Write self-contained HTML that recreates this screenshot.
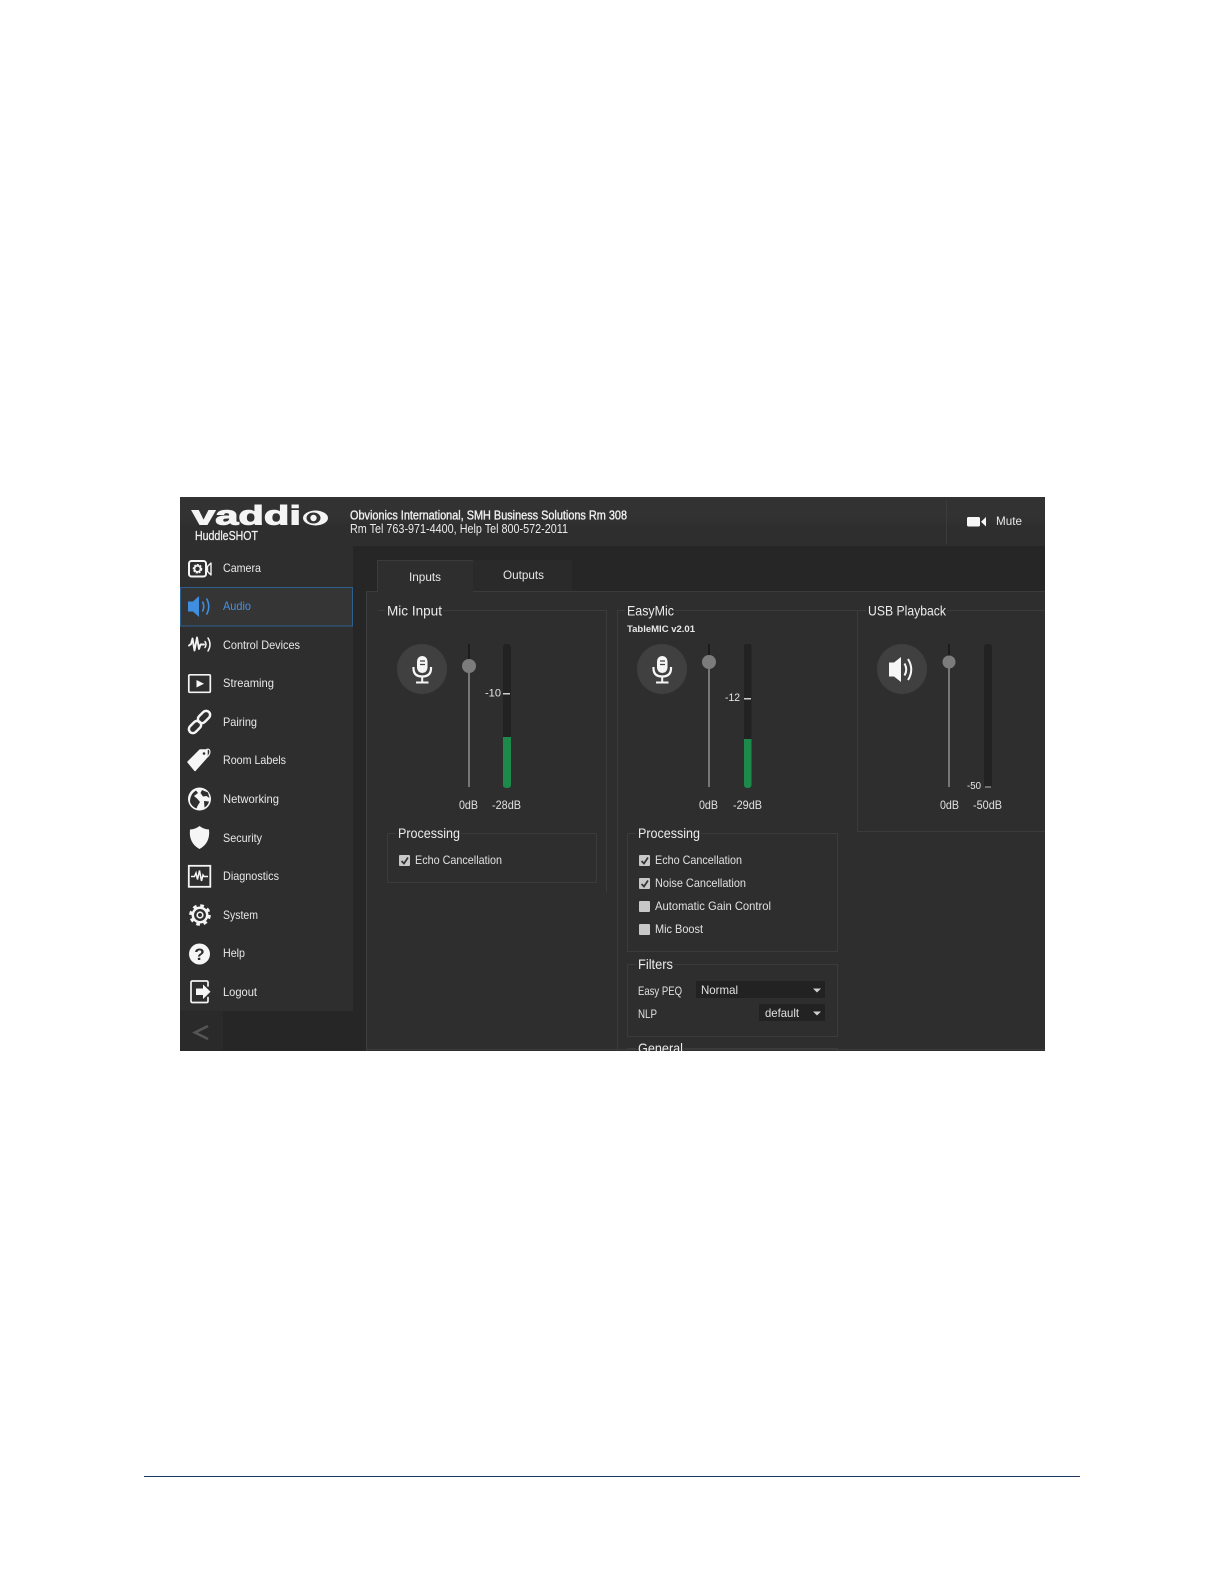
<!DOCTYPE html>
<html><head><meta charset="utf-8"><style>
html,body{margin:0;padding:0;background:#fff;width:1224px;height:1584px;overflow:hidden}
svg{display:block;position:absolute;left:0;top:0}
text{font-family:"Liberation Sans",sans-serif;fill:#e6e6e6;font-size:12px}
.n{font-size:12px;fill:#e8e8e8}
.h{font-size:14px;fill:#ececec}
.s{font-size:12px;fill:#e0e0e0}
.b{font-size:12.5px;font-weight:bold;fill:#f0f0f0}
.l{fill:none;stroke:#3b3b3b;stroke-width:1}
.i{fill:none;stroke:#f4f4f4;stroke-width:2;stroke-linecap:round;stroke-linejoin:round}
.f{fill:#f6f6f6}
.c{fill:#c8c8c8}
.k{fill:none;stroke:#333;stroke-width:1.7}
</style></head><body>
<svg width="1224" height="1584" viewBox="0 0 1224 1584" xmlns="http://www.w3.org/2000/svg">
<defs>
<clipPath id="cp"><rect x="180" y="497" width="865" height="554"/></clipPath>
<linearGradient id="hd" x1="0" y1="0" x2="0" y2="1"><stop offset="0" stop-color="#323232"/><stop offset="1" stop-color="#2d2d2d"/></linearGradient>
<filter id="sf" x="0" y="0" width="100%" height="100%"><feGaussianBlur stdDeviation="0.3"/></filter>
</defs>
<rect x="144" y="1476" width="936" height="1" fill="#1f3864"/>
<g clip-path="url(#cp)"><g filter="url(#sf)">
<rect x="180" y="497" width="865" height="554" fill="#252525"/>
<rect x="180" y="497" width="865" height="49" fill="url(#hd)"/>
<rect x="366" y="591" width="679" height="460" fill="#2f2f2f"/>
<path d="M366 591.500H1045" stroke="#3a3a3a"/>
<path d="M366.500 591V1051" stroke="#3d3d3d"/>
<rect x="180" y="546" width="173" height="465" fill="#2e2e2e"/>
<rect x="180" y="1011" width="43" height="40" fill="#2a2a2a"/>
<path d="M208 1026L195 1032.500L208 1039" fill="none" stroke="#555" stroke-width="2.600"/>
<path d="M366 1049.500H1045" stroke="#3a3a3a"/>

<!-- logo -->
<text x="192" y="524.500" textLength="109" lengthAdjust="spacingAndGlyphs" style="font-size:27px;font-weight:bold;fill:#f4f4f4;stroke:#f4f4f4;stroke-width:1">vaddi</text>
<ellipse cx="315.500" cy="518" rx="12.500" ry="7.500" fill="#f4f4f4"/><ellipse cx="313.500" cy="518" rx="7" ry="5.500" fill="#303030"/><circle cx="313.500" cy="518" r="3.200" fill="#f4f4f4"/>
<text x="195" y="540" textLength="63" lengthAdjust="spacingAndGlyphs" class="b" style="font-weight:normal;stroke:#f0f0f0;stroke-width:.25">HuddleSHOT</text>
<text x="350" y="519.500" textLength="277" lengthAdjust="spacingAndGlyphs" class="b" style="font-weight:normal;stroke:#f0f0f0;stroke-width:.35">Obvionics International, SMH Business Solutions Rm 308</text>
<text x="350" y="533" textLength="218" lengthAdjust="spacingAndGlyphs" style="font-size:12.500px;fill:#eaeaea">Rm Tel 763-971-4400, Help Tel 800-572-2011</text>
<path d="M946.500 500V544" stroke="#3a3a3a"/>
<rect x="967" y="517" width="13" height="9.500" rx="1.500" class="f"/><path d="M986 517V526.500L981 521.800Z" class="f"/>
<text x="996" y="525" textLength="26" lengthAdjust="spacingAndGlyphs" class="n">Mute</text>

<!-- tabs -->
<rect x="377" y="560" width="96" height="32" fill="#2f2f2f"/><path d="M377.500 592V560.500H473" fill="none" stroke="#3a3a3a"/>
<rect x="473" y="560" width="99" height="31" fill="#292929"/>
<text x="409" y="581" textLength="32" lengthAdjust="spacingAndGlyphs" class="n">Inputs</text>
<text x="503" y="579" textLength="41" lengthAdjust="spacingAndGlyphs" class="n">Outputs</text>

<!-- audio row -->
<rect x="180.500" y="587.500" width="172" height="38.500" fill="#353535" stroke="#2f5f8f"/>

<!-- nav labels -->
<text x="223" y="572" textLength="38" lengthAdjust="spacingAndGlyphs" class="n">Camera</text>
<text x="223" y="610" textLength="28" lengthAdjust="spacingAndGlyphs" class="n" style="fill:#4a90e2">Audio</text>
<text x="223" y="649" textLength="77" lengthAdjust="spacingAndGlyphs" class="n">Control Devices</text>
<text x="223" y="687" textLength="51" lengthAdjust="spacingAndGlyphs" class="n">Streaming</text>
<text x="223" y="726" textLength="34" lengthAdjust="spacingAndGlyphs" class="n">Pairing</text>
<text x="223" y="764" textLength="63" lengthAdjust="spacingAndGlyphs" class="n">Room Labels</text>
<text x="223" y="803" textLength="56" lengthAdjust="spacingAndGlyphs" class="n">Networking</text>
<text x="223" y="842" textLength="39" lengthAdjust="spacingAndGlyphs" class="n">Security</text>
<text x="223" y="880" textLength="56" lengthAdjust="spacingAndGlyphs" class="n">Diagnostics</text>
<text x="223" y="919" textLength="35" lengthAdjust="spacingAndGlyphs" class="n">System</text>
<text x="223" y="957" textLength="22" lengthAdjust="spacingAndGlyphs" class="n">Help</text>
<text x="223" y="996" textLength="34" lengthAdjust="spacingAndGlyphs" class="n">Logout</text>

<!-- nav icons -->
<rect x="189" y="561" width="17" height="15.500" rx="2.500" class="i"/>
<circle cx="197.500" cy="568.800" r="3.600" fill="none" stroke="#f4f4f4" stroke-width="2.400" stroke-dasharray="1.800 .9"/>
<circle cx="197.500" cy="568.800" r="3" fill="none" stroke="#f4f4f4" stroke-width="1.600"/>
<path d="M211 563V575L207.500 571.500V566.500Z" class="i" style="stroke-width:1.400"/>

<path d="M188 601.500H193L199 596V617L193 611.500H188Z" fill="#3f8ee0"/>
<path d="M202.500 601.500Q205 606.500 202.500 611.500M206.500 598.500Q211 606.500 206.500 614.500" fill="none" stroke="#3f8ee0" stroke-width="1.600"/>

<path d="M189 645.500L191 644L192.500 638.500L194.500 650.500L197 637.500L199 649L200.500 644.500H204" class="i" style="stroke-width:1.900"/>
<path d="M205 641.500Q207 644.500 205 647.500M208 638Q212 644.500 208 651" class="i" style="stroke-width:1.500"/>

<rect x="188.800" y="674.800" width="21.500" height="17.500" rx="1" class="i" style="stroke-width:1.700"/>
<path d="M196.500 680V687.500L204 683.700Z" class="f"/>

<rect x="197" y="713" width="14" height="8" rx="4" transform="rotate(-45 204 717)" fill="none" stroke="#f4f4f4" stroke-width="2.500"/>
<rect x="188" y="723" width="14" height="8" rx="4" transform="rotate(-45 195 727)" fill="none" stroke="#f4f4f4" stroke-width="2.500"/>

<path d="M188 762L200 750H207V757L195 770.500Z" class="f" stroke="#f6f6f6" stroke-linejoin="round" stroke-width="1.500"/>
<circle cx="204" cy="753.500" r="1.300" fill="#2e2e2e"/>
<path d="M205 752Q207 747.500 209.500 750Q211 753 207.500 757" fill="none" stroke="#f4f4f4" stroke-width="1.200"/>

<circle cx="199.500" cy="799" r="11.500" class="f"/>
<path d="M190 802Q190 794 196 790.500L198 793L194 796L197.500 799L200 802L197.500 806L196.500 808.500Q191.500 806.500 190 802ZM202 790L208 792.500L209.500 798L206.500 796L203 796.500L200.500 793ZM204 801L209 801.500Q208 805.500 204.500 807.500Z" fill="#2e2e2e"/>

<path d="M199.500 826Q204 829.500 209 829.500Q210.500 843 199.500 849Q188.500 843 190 829.500Q195 829.500 199.500 826Z" class="f"/>

<rect x="188.800" y="865.800" width="21.500" height="21" class="i" style="stroke-width:1.800;stroke-linejoin:miter"/>
<path d="M191 876.500H194.500L196 873L197.500 879.500L199.500 870.500L201.500 881L203 875L204 876.500H208" fill="none" stroke="#f4f4f4" stroke-width="1.500"/>

<circle cx="200" cy="915" r="7.200" fill="none" stroke="#f4f4f4" stroke-width="2.500"/>
<circle cx="200" cy="915" r="9.200" fill="none" stroke="#f4f4f4" stroke-width="3.200" stroke-dasharray="3.600 3.620"/>
<circle cx="200" cy="915" r="2.800" fill="none" stroke="#f4f4f4" stroke-width="1.600"/>

<circle cx="199.500" cy="954" r="10.500" class="f"/>
<text x="199.500" y="960" text-anchor="middle" style="font-size:17px;font-weight:bold;fill:#2e2e2e">?</text>

<path d="M208 986V982.500Q208 981 206.500 981H192.500Q191 981 191 982.500V1001Q191 1002.500 192.500 1002.500H206.500Q208 1002.500 208 1001V997.500" class="i" style="stroke-width:1.700"/>
<path d="M196 988.500H203V984.500L210.500 991.700L203 999V995H196Z" class="f"/>

<!-- fieldsets -->
<path d="M378 610.500H385M443 610.500H606.500V892" class="l"/>
<path d="M617.500 1051V610.500H625M675 610.500H857.500V831.500H1045M857.500 610.500H866M947 610.500H1045" class="l"/>
<path d="M396 833.500H387.500V882.500H596.500V833.500H461" class="l"/>
<path d="M636 833.500H627.500V951.500H837.500V833.500H701" class="l"/>
<path d="M636 964.500H627.500V1036.500H837.500V964.500H674" class="l"/>
<path d="M636 1048.500H627.500V1051M837.500 1051V1048.500H684" class="l"/>

<text x="387" y="615.500" textLength="55" lengthAdjust="spacingAndGlyphs" class="h">Mic Input</text>
<text x="627" y="615.500" textLength="47" lengthAdjust="spacingAndGlyphs" class="h">EasyMic</text>
<text x="868" y="615.500" textLength="78" lengthAdjust="spacingAndGlyphs" class="h">USB Playback</text>
<text x="627" y="632" textLength="68" lengthAdjust="spacingAndGlyphs" style="font-size:9.500px;font-weight:bold;fill:#e8e8e8">TableMIC v2.01</text>

<!-- circles -->
<circle cx="422" cy="669" r="25" fill="#3f3f3f"/>
<circle cx="662" cy="669" r="25" fill="#3f3f3f"/>
<circle cx="902" cy="669" r="25" fill="#3f3f3f"/>
<g>
<rect x="417" y="656" width="10.500" height="17" rx="5.200" class="f"/>
<path d="M420 661H425M420 664.500H425" stroke="#3f3f3f" stroke-width="1.300"/>
<path d="M413.500 667V669Q414 676.500 422.200 676.500Q430.500 676.500 431 669V667" fill="none" stroke="#f6f6f6" stroke-width="2.200"/>
<path d="M422.200 676V681.500M416 682.500H428.500" stroke="#f6f6f6" stroke-width="2" fill="none"/>
</g>
<g transform="translate(240 0)">
<rect x="417" y="656" width="10.500" height="17" rx="5.200" class="f"/>
<path d="M420 661H425M420 664.500H425" stroke="#3f3f3f" stroke-width="1.300"/>
<path d="M413.500 667V669Q414 676.500 422.200 676.500Q430.500 676.500 431 669V667" fill="none" stroke="#f6f6f6" stroke-width="2.200"/>
<path d="M422.200 676V681.500M416 682.500H428.500" stroke="#f6f6f6" stroke-width="2" fill="none"/>
</g>
<path d="M889 662.500H894L901 657V682L894 676.500H889Z" class="f"/>
<path d="M904.500 663.500Q908 669.500 904.500 675.500M908 659Q914.500 669.500 908 680" fill="none" stroke="#f6f6f6" stroke-width="2"/>

<!-- sliders -->
<path d="M469 644V787" stroke="#777" stroke-width="2"/><path d="M469 644V660" stroke="#1c1c1c" stroke-width="2"/><circle cx="469" cy="666" r="7" fill="#7c7c7c"/>
<path d="M709 644V787" stroke="#777" stroke-width="2"/><path d="M709 644V656" stroke="#1c1c1c" stroke-width="2"/><circle cx="709" cy="662" r="7" fill="#7c7c7c"/>
<path d="M949 644V787" stroke="#777" stroke-width="2"/><path d="M949 644V656" stroke="#1c1c1c" stroke-width="2"/><circle cx="949" cy="662" r="6.500" fill="#7c7c7c"/>

<!-- meters -->
<rect x="503" y="644" width="8" height="144" rx="3" fill="#222"/>
<path d="M503 737H511V785Q511 788 507 788Q503 788 503 785Z" fill="#1f8a4c"/>
<rect x="503" y="693" width="7" height="1.500" fill="#cfcfcf"/>
<text x="485" y="696.500" textLength="16" lengthAdjust="spacingAndGlyphs" style="font-size:11px">-10</text>

<rect x="744" y="644" width="7.500" height="144" rx="2" fill="#222"/>
<path d="M744 739H751.500V785Q751.500 788 747.700 788Q744 788 744 785Z" fill="#1f8a4c"/>
<rect x="744" y="698" width="7" height="1.500" fill="#cfcfcf"/>
<text x="725" y="701" textLength="15" lengthAdjust="spacingAndGlyphs" style="font-size:11px">-12</text>

<rect x="984" y="644" width="8" height="144" rx="3" fill="#222"/>
<rect x="985" y="786.500" width="6" height="1" fill="#bbb"/>
<text x="967" y="789" textLength="14" lengthAdjust="spacingAndGlyphs" style="font-size:10px">-50</text>

<text x="459" y="809" textLength="19" lengthAdjust="spacingAndGlyphs" class="s">0dB</text>
<text x="492" y="809" textLength="29" lengthAdjust="spacingAndGlyphs" class="s">-28dB</text>
<text x="699" y="809" textLength="19" lengthAdjust="spacingAndGlyphs" class="s">0dB</text>
<text x="733" y="809" textLength="29" lengthAdjust="spacingAndGlyphs" class="s">-29dB</text>
<text x="940" y="809" textLength="19" lengthAdjust="spacingAndGlyphs" class="s">0dB</text>
<text x="973" y="809" textLength="29" lengthAdjust="spacingAndGlyphs" class="s">-50dB</text>

<!-- processing -->
<text x="398" y="838" textLength="62" lengthAdjust="spacingAndGlyphs" class="h">Processing</text>
<rect x="399" y="855" width="11" height="11" rx="1" class="c"/><path d="M401.500 861L404 863.500L408 857.500" class="k"/>
<text x="415" y="864" textLength="87" lengthAdjust="spacingAndGlyphs" class="s">Echo Cancellation</text>

<text x="638" y="838" textLength="62" lengthAdjust="spacingAndGlyphs" class="h">Processing</text>
<rect x="639" y="855" width="11" height="11" rx="1" class="c"/><path d="M641.500 861L644 863.500L648 857.500" class="k"/>
<text x="655" y="864" textLength="87" lengthAdjust="spacingAndGlyphs" class="s">Echo Cancellation</text>
<rect x="639" y="878" width="11" height="11" rx="1" class="c"/><path d="M641.500 884L644 886.500L648 880.500" class="k"/>
<text x="655" y="887" textLength="91" lengthAdjust="spacingAndGlyphs" class="s">Noise Cancellation</text>
<rect x="639" y="901" width="11" height="11" rx="1" class="c"/>
<text x="655" y="910" textLength="116" lengthAdjust="spacingAndGlyphs" class="s">Automatic Gain Control</text>
<rect x="639" y="924" width="11" height="11" rx="1" class="c"/>
<text x="655" y="933" textLength="48" lengthAdjust="spacingAndGlyphs" class="s">Mic Boost</text>

<!-- filters -->
<text x="638" y="969" textLength="35" lengthAdjust="spacingAndGlyphs" class="h">Filters</text>
<text x="638" y="995" textLength="44" lengthAdjust="spacingAndGlyphs" class="s">Easy PEQ</text>
<rect x="696" y="981" width="129" height="17" fill="#232323"/>
<text x="701" y="994" textLength="37" lengthAdjust="spacingAndGlyphs" class="s">Normal</text>
<path d="M813 988.500H821L817 992.500Z" fill="#cfcfcf"/>
<text x="638" y="1018" textLength="19" lengthAdjust="spacingAndGlyphs" class="s">NLP</text>
<rect x="759" y="1004" width="66" height="17" fill="#232323"/>
<text x="765" y="1017" textLength="34" lengthAdjust="spacingAndGlyphs" class="s">default</text>
<path d="M813 1011.500H821L817 1015.500Z" fill="#cfcfcf"/>
<text x="638" y="1053" textLength="45" lengthAdjust="spacingAndGlyphs" class="h">General</text>
</g></g>
</svg>
</body></html>
